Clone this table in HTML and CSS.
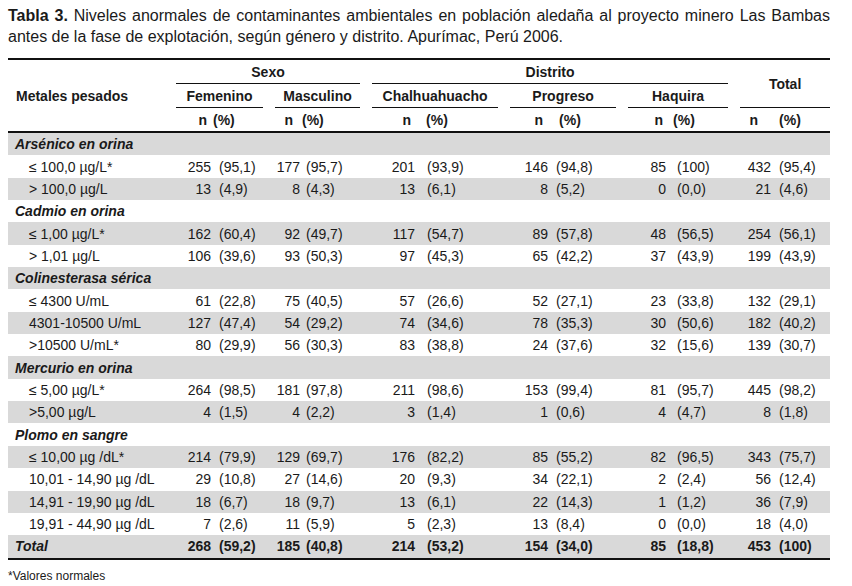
FILE: index.html
```html
<!DOCTYPE html>
<html lang="es">
<head>
<meta charset="utf-8">
<title>Tabla 3</title>
<link rel="stylesheet" href="styles.css">
</head>
<body>
<p class="caption"><b>Tabla 3.</b> Niveles anormales de contaminantes ambientales en población aledaña al proyecto minero Las Bambas antes de la fase de explotación, según género y distrito. Apurímac, Perú 2006.</p>
<table class="data">
  <colgroup>
    <col class="w-label">
    <col class="w-fn"><col class="w-fp">
    <col class="w-mn"><col class="w-mp">
    <col class="w-cn"><col class="w-cp">
    <col class="w-pn"><col class="w-pp">
    <col class="w-hn"><col class="w-hp">
    <col class="w-tn"><col class="w-tp">
  </colgroup>
  <thead>
    <tr class="h1">
      <th rowspan="3" class="metal">Metales pesados</th>
      <th colspan="4" class="grp">Sexo</th>
      <th colspan="6" class="grp">Distrito</th>
      <th colspan="2" rowspan="2" class="grp last">Total</th>
    </tr>
    <tr class="h2">
      <th colspan="2" class="grp">Femenino</th>
      <th colspan="2" class="grp">Masculino</th>
      <th colspan="2" class="grp">Chalhuahuacho</th>
      <th colspan="2" class="grp">Progreso</th>
      <th colspan="2" class="grp">Haquira</th>
    </tr>
    <tr class="units">
      <th class="hn">n</th><th class="hp">(%)</th>
      <th class="hn">n</th><th class="hp">(%)</th>
      <th class="hn">n</th><th class="hp">(%)</th>
      <th class="hn">n</th><th class="hp">(%)</th>
      <th class="hn">n</th><th class="hp">(%)</th>
      <th class="hn">n</th><th class="hp">(%)</th>
    </tr>
  </thead>
  <tbody>
    <tr class="cat"><td colspan="13">Arsénico en orina</td></tr>
    <tr><td>≤ 100,0 µg/L*</td><td>255</td><td>(95,1)</td><td>177</td><td>(95,7)</td><td>201</td><td>(93,9)</td><td>146</td><td>(94,8)</td><td>85</td><td>(100)</td><td>432</td><td>(95,4)</td></tr>
    <tr><td>&gt; 100,0 µg/L</td><td>13</td><td>(4,9)</td><td>8</td><td>(4,3)</td><td>13</td><td>(6,1)</td><td>8</td><td>(5,2)</td><td>0</td><td>(0,0)</td><td>21</td><td>(4,6)</td></tr>
    <tr class="cat"><td colspan="13">Cadmio en orina</td></tr>
    <tr><td>≤ 1,00 µg/L*</td><td>162</td><td>(60,4)</td><td>92</td><td>(49,7)</td><td>117</td><td>(54,7)</td><td>89</td><td>(57,8)</td><td>48</td><td>(56,5)</td><td>254</td><td>(56,1)</td></tr>
    <tr><td>&gt; 1,01 µg/L</td><td>106</td><td>(39,6)</td><td>93</td><td>(50,3)</td><td>97</td><td>(45,3)</td><td>65</td><td>(42,2)</td><td>37</td><td>(43,9)</td><td>199</td><td>(43,9)</td></tr>
    <tr class="cat"><td colspan="13">Colinesterasa sérica</td></tr>
    <tr><td>≤ 4300 U/mL</td><td>61</td><td>(22,8)</td><td>75</td><td>(40,5)</td><td>57</td><td>(26,6)</td><td>52</td><td>(27,1)</td><td>23</td><td>(33,8)</td><td>132</td><td>(29,1)</td></tr>
    <tr><td>4301-10500 U/mL</td><td>127</td><td>(47,4)</td><td>54</td><td>(29,2)</td><td>74</td><td>(34,6)</td><td>78</td><td>(35,3)</td><td>30</td><td>(50,6)</td><td>182</td><td>(40,2)</td></tr>
    <tr><td>&gt;10500 U/mL*</td><td>80</td><td>(29,9)</td><td>56</td><td>(30,3)</td><td>83</td><td>(38,8)</td><td>24</td><td>(37,6)</td><td>32</td><td>(15,6)</td><td>139</td><td>(30,7)</td></tr>
    <tr class="cat"><td colspan="13">Mercurio en orina</td></tr>
    <tr><td>≤ 5,00 µg/L*</td><td>264</td><td>(98,5)</td><td>181</td><td>(97,8)</td><td>211</td><td>(98,6)</td><td>153</td><td>(99,4)</td><td>81</td><td>(95,7)</td><td>445</td><td>(98,2)</td></tr>
    <tr><td>&gt;5,00 µg/L</td><td>4</td><td>(1,5)</td><td>4</td><td>(2,2)</td><td>3</td><td>(1,4)</td><td>1</td><td>(0,6)</td><td>4</td><td>(4,7)</td><td>8</td><td>(1,8)</td></tr>
    <tr class="cat"><td colspan="13">Plomo en sangre</td></tr>
    <tr><td>≤ 10,00 µg /dL*</td><td>214</td><td>(79,9)</td><td>129</td><td>(69,7)</td><td>176</td><td>(82,2)</td><td>85</td><td>(55,2)</td><td>82</td><td>(96,5)</td><td>343</td><td>(75,7)</td></tr>
    <tr><td>10,01 - 14,90 µg /dL</td><td>29</td><td>(10,8)</td><td>27</td><td>(14,6)</td><td>20</td><td>(9,3)</td><td>34</td><td>(22,1)</td><td>2</td><td>(2,4)</td><td>56</td><td>(12,4)</td></tr>
    <tr><td>14,91 - 19,90 µg /dL</td><td>18</td><td>(6,7)</td><td>18</td><td>(9,7)</td><td>13</td><td>(6,1)</td><td>22</td><td>(14,3)</td><td>1</td><td>(1,2)</td><td>36</td><td>(7,9)</td></tr>
    <tr><td>19,91 - 44,90 µg /dL</td><td>7</td><td>(2,6)</td><td>11</td><td>(5,9)</td><td>5</td><td>(2,3)</td><td>13</td><td>(8,4)</td><td>0</td><td>(0,0)</td><td>18</td><td>(4,0)</td></tr>
    <tr class="total"><td>Total</td><td>268</td><td>(59,2)</td><td>185</td><td>(40,8)</td><td>214</td><td>(53,2)</td><td>154</td><td>(34,0)</td><td>85</td><td>(18,8)</td><td>453</td><td>(100)</td></tr>
  </tbody>
</table>
<p class="note">*Valores normales</p>
</body>
</html>
```

FILE: styles.css
```css
html, body {
  background: #ffffff;
}

body {
  margin: 0;
  padding: 5px 0 0 8px;
  width: 822px;
  font-family: "Liberation Sans", Arial, sans-serif;
  color: #1a1a1a;
}

.caption {
  margin: 0;
  font-size: 16px;
  line-height: 21px;
  text-align: justify;
}

.caption b {
  font-weight: bold;
}

.data {
  margin-top: 11px;
  width: 822px;
  table-layout: fixed;
  border-collapse: separate;
  border-spacing: 0;
  border-top: 2px solid #111;
  border-bottom: 2px solid #111;
  font-size: 14px;
}

.w-label { width: 168px; }
.w-fn { width: 35px; }
.w-fp { width: 64px; }
.w-mn { width: 25px; }
.w-mp { width: 72px; }
.w-cn { width: 43px; }
.w-cp { width: 95px; }
.w-pn { width: 38px; }
.w-pp { width: 80px; }
.w-hn { width: 38px; }
.w-hp { width: 74px; }
.w-tn { width: 31px; }
.w-tp { width: 59px; }

.data th,
.data td {
  padding: 0;
  white-space: nowrap;
  overflow: visible;
}

.data th {
  font-weight: bold;
  text-align: center;
  vertical-align: middle;
}

.h1 { height: 24px; }
.h2 { height: 24px; }
.units { height: 25px; }

.data th.metal {
  text-align: left;
  padding-left: 8px;
  border-bottom: 2px solid #111;
}

.data th.grp {
  padding-right: 12px;
  background: linear-gradient(#111, #111) left bottom / calc(100% - 12px) 1px no-repeat;
}

.data th.grp.last {
  padding-right: 0;
  background-size: 100% 1px;
}

.units th {
  border-bottom: 2px solid #111;
  vertical-align: middle;
}

.units th.hn { text-align: right; }
.units th.hp { text-align: left; }

.units th:nth-child(1) { padding-right: 4px; }
.units th:nth-child(2) { padding-left: 2px; }
.units th:nth-child(3) { padding-right: 7px; }
.units th:nth-child(4) { padding-left: 2px; }
.units th:nth-child(5) { padding-right: 4px; }
.units th:nth-child(6) { padding-left: 11px; }
.units th:nth-child(7) { padding-right: 5px; }
.units th:nth-child(8) { padding-left: 11px; }
.units th:nth-child(9) { padding-right: 3px; }
.units th:nth-child(10) { padding-left: 7px; }
.units th:nth-child(11) { padding-right: 13px; }
.units th:nth-child(12) { padding-left: 8px; }

.data tbody tr {
  height: 22.35px;
}

.data tbody tr:nth-child(odd) {
  background: #d9d9d9;
}

.data tbody td {
  vertical-align: middle;
  text-align: right;
}

.data tbody td:nth-child(1) {
  text-align: left;
  padding-left: 21px;
}

.data tbody td:nth-child(odd):not(:first-child) {
  text-align: left;
}

.data tbody td:nth-child(3) { padding-left: 8px; }
.data tbody td:nth-child(5) { padding-left: 6px; }
.data tbody td:nth-child(7) { padding-left: 12px; }
.data tbody td:nth-child(9) { padding-left: 8px; }
.data tbody td:nth-child(11) { padding-left: 11px; }
.data tbody td:nth-child(13) { padding-left: 8px; }

.data tbody tr.cat td {
  text-align: left;
  padding-left: 7px;
  font-weight: bold;
  font-style: italic;
}

.data tbody tr.total td {
  font-weight: bold;
}

.data tbody tr.total td:first-child {
  font-style: italic;
  padding-left: 7px;
}

.note {
  margin: 9px 0 0;
  font-size: 12px;
  line-height: 14px;
}
```
